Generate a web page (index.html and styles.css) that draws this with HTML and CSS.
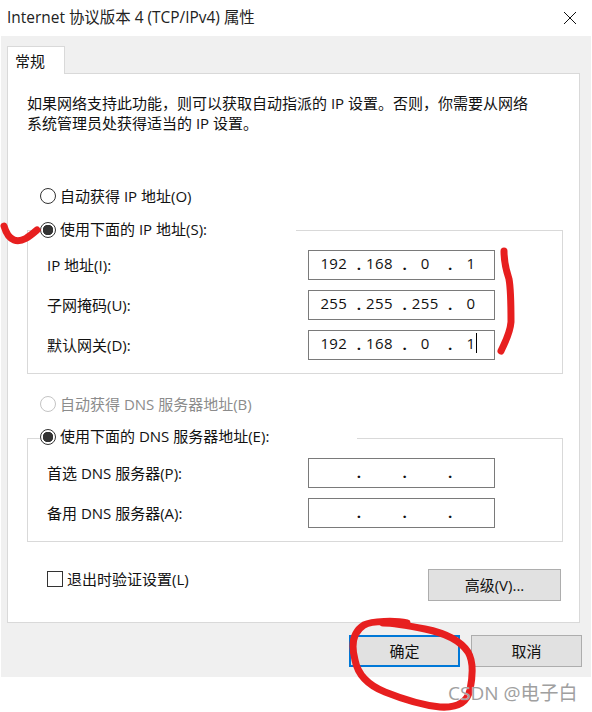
FILE: index.html
```html
<!DOCTYPE html>
<html lang="zh">
<head>
<meta charset="utf-8">
<title>Internet 协议版本 4 (TCP/IPv4) 属性</title>
<link rel="stylesheet" href="styles.css">
</head>
<body>
<div class="window">
  <header class="titlebar">
    <span class="title">Internet 协议版本 4 (TCP/IPv4) 属性</span>
    <svg class="close" width="14" height="14" viewBox="0 0 14 14"><path d="M1 1L13 13M13 1L1 13" stroke="#111" stroke-width="1" fill="none"/></svg>
  </header>
  <main class="panel">
    <div class="tabs"><div class="tab">常规</div></div>
    <section class="page">
      <p class="intro">如果网络支持此功能，则可以获取自动指派的 IP 设置。否则，你需要从网络<br>系统管理员处获得适当的 IP 设置。</p>
      <label class="radio-row first"><span class="radio"></span>自动获得 IP 地址(O)</label>
      <fieldset class="group ip-group">
        <legend class="legend"><span class="radio on"></span>使用下面的 IP 地址(S):</legend>
        <div class="row"><span>IP 地址(I):</span>
          <div class="ip"><span class="seg">192</span><i>.</i><span class="seg">168</span><i>.</i><span class="seg">0</span><i>.</i><span class="seg">1</span></div></div>
        <div class="row"><span>子网掩码(U):</span>
          <div class="ip"><span class="seg">255</span><i>.</i><span class="seg">255</span><i>.</i><span class="seg">255</span><i>.</i><span class="seg">0</span></div></div>
        <div class="row"><span>默认网关(D):</span>
          <div class="ip"><span class="seg">192</span><i>.</i><span class="seg">168</span><i>.</i><span class="seg">0</span><i>.</i><span class="seg">1</span><b class="caret"></b></div></div>
      </fieldset>
      <label class="radio-row disabled"><span class="radio"></span>自动获得 DNS 服务器地址(B)</label>
      <fieldset class="group dns-group">
        <legend class="legend"><span class="radio on"></span>使用下面的 DNS 服务器地址(E):</legend>
        <div class="row"><span>首选 DNS 服务器(P):</span>
          <div class="ip"><span class="seg"></span><i>.</i><span class="seg"></span><i>.</i><span class="seg"></span><i>.</i><span class="seg"></span></div></div>
        <div class="row"><span>备用 DNS 服务器(A):</span>
          <div class="ip"><span class="seg"></span><i>.</i><span class="seg"></span><i>.</i><span class="seg"></span><i>.</i><span class="seg"></span></div></div>
      </fieldset>
      <div class="options">
        <label class="check-row"><span class="check"></span>退出时验证设置(L)</label>
        <button class="btn advanced">高级(V)...</button>
      </div>
    </section>
    <footer class="actions">
      <button class="btn primary">确定</button>
      <button class="btn">取消</button>
    </footer>
  </main>
  <svg class="ink" width="592" height="712" viewBox="0 0 592 712">
    <path d="M4 226C6 233 9 238 14 240C22 243 30 236 37 230" />
    <path d="M504 251C504 262 506 270 509 279C511 290 511 310 511 322C510 334 505 342 501 351" />
    <path d="M383 623C395 623 410 626 425 629C445 633 460 640 468 652C474 662 472 680 470 690C467 703 456 708 440 707C420 705 400 698 385 692C370 686 358 676 355 660C351 645 353 632 364 625C372 621 395 620 407 623" />
  </svg>
  <div class="watermark">CSDN @电子白</div>
</div>
</body>
</html>
```
FILE: styles.css
```css
* { box-sizing: border-box; }
html, body { margin: 0; padding: 0; background: #fff; }
body {
  font-family: "Open Sans", "Noto Sans CJK SC", sans-serif;
  font-size: 15px;
  line-height: 20px;
  color: #111;
}
.window { position: relative; width: 592px; height: 712px; overflow: hidden; }
.titlebar {
  height: 36px;
  padding: 0 15px 0 7px;
  display: flex;
  align-items: center;
  justify-content: space-between;
}
.title { margin-bottom: 2px; font-size: 15.45px; color: #222; }
.close { display: block; }
.panel {
  margin-left: 1px;
  width: 590px;
  height: 641px;
  background: #f0f0f0;
  display: flex;
  flex-direction: column;
  padding-top: 10px;
}
.tabs { height: 27px; padding-left: 6px; }
.tab {
  position: relative;
  z-index: 1;
  width: 58px;
  height: 28px;
  padding: 4px 0 0 7px;
  background: #fff;
  border: 1px solid #d9d9d9;
  border-bottom: 0;
}
.page {
  margin: 0 11px 0 6px;
  height: 550px;
  background: #fff;
  border: 1px solid #d9d9d9;
}
.intro { margin: 19px 0 0 19px; }
.radio-row { display: flex; align-items: center; height: 20px; padding-left: 32px; }
.radio-row.first { margin-top: 53px; }
.radio-row.disabled { margin-top: 20px; color: #8c8c8c; }
.radio {
  flex: none;
  display: inline-block;
  width: 16px;
  height: 16px;
  margin-right: 4px;
  border: 1px solid #333;
  border-radius: 50%;
  background: #fff;
  vertical-align: -3px;
}
.radio.on { background: radial-gradient(circle, #333 0 5px, #fff 5.5px); }
.disabled .radio { border-color: #c4c4c4; }
.group {
  margin: 0 16px 0 19px;
  padding: 10px 67px 13px 19px;
  min-width: 0;
  border: 1px solid #d9d9d9;
}
.legend { padding: 0; margin-left: -7px; white-space: nowrap; height: 20px; line-height: 18px; }
.ip-group { margin-top: 14px; }
.ip-group .legend { width: 256px; }
.dns-group { margin-top: 14px; }
.dns-group .legend { width: 317px; line-height: 16px; }
.row { display: flex; align-items: center; justify-content: space-between; height: 30px; }
.row + .row { margin-top: 10px; }
.ip {
  position: relative;
  flex: none;
  width: 187px;
  height: 30px;
  padding-left: 4px;
  border: 1px solid #7a7a7a;
  display: flex;
  align-items: center;
}
.seg { width: 41.7px; padding-bottom: 5px; text-align: center; letter-spacing: 0.4px; }
.ip i { width: 4px; padding: 0 0 3px 2px; font-style: normal; font-weight: 700; }
.caret {
  position: absolute;
  left: 167px;
  top: 2px;
  width: 1px;
  height: 20px;
  background: #000;
}
.options {
  margin: 27px 18px 0 39px;
  height: 32px;
  display: flex;
  align-items: flex-start;
  justify-content: space-between;
}
.check-row { display: flex; align-items: center; }
.check {
  width: 16px;
  height: 16px;
  margin-right: 4px;
  border: 1px solid #333;
  background: #fff;
}
.btn {
  width: 111px;
  height: 32px;
  padding: 0;
  font: inherit;
  color: #111;
  background: #e1e1e1;
  border: 1px solid #adadad;
}
.advanced { width: 133px; }
.primary { border: 2px solid #0078d7; }
.actions {
  display: flex;
  justify-content: flex-end;
  gap: 11px;
  padding: 12px 9px 0 0;
}
.ink {
  position: absolute;
  left: 0;
  top: 0;
  fill: none;
  stroke: #e71f1f;
  stroke-width: 7;
  stroke-linecap: round;
  stroke-linejoin: round;
}
.watermark {
  position: absolute;
  left: 448px;
  top: 681px;
  font-size: 19px;
  line-height: 24px;
  white-space: nowrap;
  color: #a0a0a0;
  text-shadow: 0 0 1px #fff;
}
```
